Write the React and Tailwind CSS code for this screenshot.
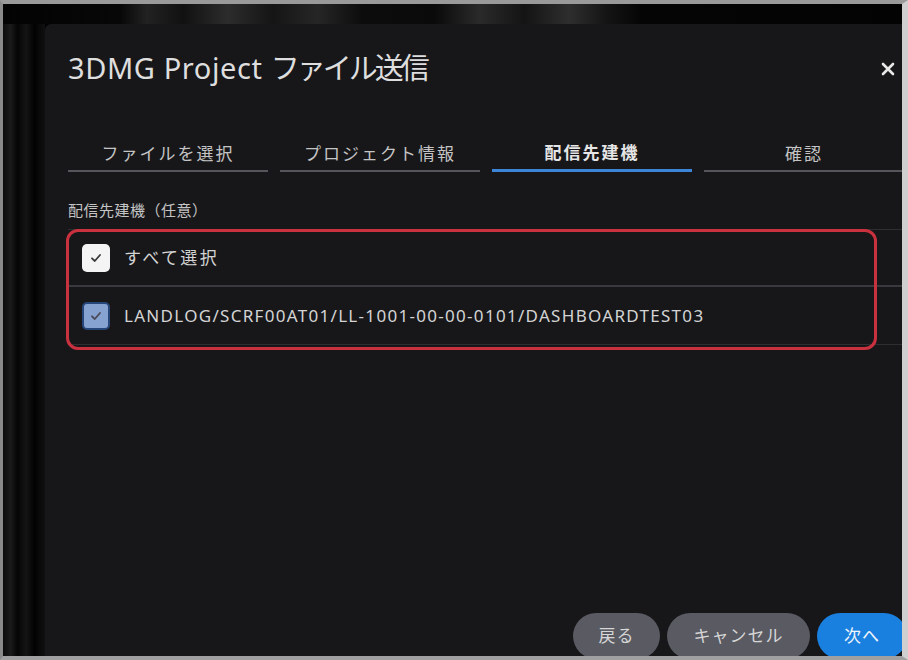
import React from "react";

const FONT = { fontFamily: "'Noto Sans', 'Noto Sans CJK JP', sans-serif" };

function Tab({ label, active }) {
  return (
    <div
      className={
        "w-[200px] shrink-0 flex items-center justify-center h-[35px] " +
        (active ? "border-b-[3px] border-[#3d85d6] text-[#e6e6e6] font-semibold" : "border-b-2 border-[#55565b] text-[#c4c4c4]")
      }
    >
      <span className="text-[17px] tracking-[2px] leading-[28px]">{label}</span>
    </div>
  );
}

function Check({ variant }) {
  if (variant === "white") {
    return (
      <div className="w-[28px] h-[28px] shrink-0 rounded-[5px] bg-[#f4f4f4] flex items-center justify-center">
        <svg width="14" height="14" viewBox="0 0 14 14">
          <path d="M3 7.3 L5.8 10 L11 4" fill="none" stroke="#3a3a3a" strokeWidth="1.8" strokeLinecap="round" strokeLinejoin="round" />
        </svg>
      </div>
    );
  }
  return (
    <div className="w-[28px] h-[28px] shrink-0 rounded-[5px] bg-[#86a2d0] border-2 border-[#26467a] flex items-center justify-center">
      <svg width="14" height="14" viewBox="0 0 14 14">
        <path d="M3 7.3 L5.8 10 L11 4" fill="none" stroke="#4a4a58" strokeWidth="1.8" strokeLinecap="round" strokeLinejoin="round" />
      </svg>
    </div>
  );
}

export default function App() {
  return (
    <div
      style={FONT}
      className="w-[908px] h-[660px] overflow-hidden flex flex-col bg-black border-t-4 border-l-[3px] border-b-4 border-r-[6px] border-t-[#9a9a9a] border-l-[#8a8a8a] border-b-[#a0a0a0] border-r-[#cfcfcf]"
    >
      <div className="h-[20px] shrink-0 bg-[linear-gradient(90deg,#030303_0%,#070707_13%,#222_16%,#111_20%,#2c2c2c_25%,#151515_30%,#262626_35%,#0c0c0c_40%,#0a0a0a_48%,#2a2a2a_53%,#141414_58%,#2e2e2e_63%,#151515_67%,#050505_71%,#030303_100%)]" />
      <div className="flex flex-1 min-h-0">
        <div className="w-[42px] shrink-0 bg-[linear-gradient(90deg,#0c0c0c_0%,#1a1a1a_18%,#050505_35%,#141414_55%,#020202_75%,#101010_100%)]" />
        <div className="flex-1 min-w-0 overflow-hidden rounded-tl-[6px] bg-[#17171a]">
          <div className="w-[870px] h-full flex flex-col">
            <div className="flex items-center justify-between pt-[24px] pl-[23px] pr-[20px]">
              <div className="h-[40px] leading-[40px] text-[29px] text-[#dedede] tracking-[0.6px]">
                3DMG Project <span className="tracking-[-3px]">ファイル送信</span>
              </div>
              <svg width="14" height="14" viewBox="0 0 14 14" className="mt-[2px]">
                <path d="M2 2 L12 12 M12 2 L2 12" stroke="#e8e8e8" strokeWidth="2.6" strokeLinecap="round" />
              </svg>
            </div>

            <div className="flex gap-[12px] pl-[23px] mt-[49px]">
              <Tab label="ファイルを選択" />
              <Tab label="プロジェクト情報" />
              <Tab label="配信先建機" active />
              <Tab label="確認" />
            </div>

            <div className="pl-[23px] mt-[28px] text-[15px] leading-[20px] text-[#c4c4c4] tracking-[0.5px]">
              配信先建機（任意）
            </div>

            <div className="relative ml-[23px] mt-[9px] border-t border-[#2e2e32]">
              <div className="flex items-center h-[57px] pl-[14px] gap-[14px] border-b-2 border-[#3a3a3e]">
                <Check variant="white" />
                <span className="text-[17px] text-[#d4d4d4] tracking-[2.4px]">すべて選択</span>
              </div>
              <div className="flex items-center h-[58px] pl-[14px] gap-[14px] border-b border-[#2e2e32]">
                <Check variant="blue" />
                <span className="text-[17px] text-[#d4d4d4] tracking-[1.3px]">
                  LANDLOG/SCRF00AT01/LL-1001-00-00-0101/DASHBOARDTEST03
                </span>
              </div>
              <div className="absolute left-[-2px] top-[-1px] w-[811px] h-[121px] rounded-[12px] border-[3px] border-[#c8313d] pointer-events-none" />
            </div>

            <div className="mt-auto flex justify-end gap-[7px] pr-[8px] h-[43px] items-start">
              <button className="w-[87px] h-[46px] shrink-0 rounded-full bg-[#595a62] text-[#d6d6d6] text-[17px] tracking-[1px]">
                戻る
              </button>
              <button className="w-[143px] h-[46px] shrink-0 rounded-full bg-[#595a62] text-[#d6d6d6] text-[17px] tracking-[1px]">
                キャンセル
              </button>
              <button className="w-[90px] h-[46px] shrink-0 rounded-full bg-[#1a80e0] text-[#eef4fb] text-[17px] tracking-[1px]">
                次へ
              </button>
            </div>
          </div>
        </div>
      </div>
    </div>
  );
}
